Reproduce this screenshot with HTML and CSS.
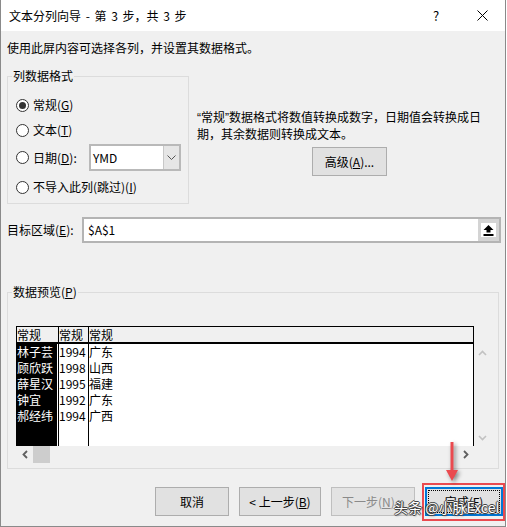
FILE: index.html
```html
<!DOCTYPE html>
<html lang="zh-CN">
<head>
<meta charset="utf-8">
<title>文本分列向导</title>
<link rel="stylesheet" href="styles.css">
</head>
<body>
<div class="window">
  <div class="titlebar">
    <span class="title">文本分列向导 - 第 3 步，共 3 步</span>
    <span class="tb-btn help">?</span>
    <span class="tb-btn close"><svg width="11" height="11" viewBox="0 0 11 11"><path d="M0.5 0.5L10.5 10.5M10.5 0.5L0.5 10.5" stroke="#000" stroke-width="1" fill="none"/></svg></span>
  </div>
  <div class="content">
    <p class="intro">使用此屏内容可选择各列，并设置其数据格式。</p>

    <div class="format-row">
      <fieldset class="group format-group">
        <legend>列数据格式</legend>
        <div class="group-inner">
          <div class="radio-row"><span class="radio checked"></span><span class="rlabel">常规(<u>G</u>)</span></div>
          <div class="radio-row gap5"><span class="radio"></span><span class="rlabel">文本(<u>T</u>)</span></div>
          <div class="radio-row date-row"><span class="radio"></span><span class="rlabel date-label">日期(<u>D</u>):</span>
            <div class="select"><span class="select-val">YMD</span><span class="select-arrow"><svg width="9" height="5" viewBox="0 0 9 5"><path d="M0.5 0.5L4.5 4.5L8.5 0.5" fill="none" stroke="#555" stroke-width="1"/></svg></span></div>
          </div>
          <div class="radio-row gap6"><span class="radio"></span><span class="rlabel">不导入此列(跳过)(<u>I</u>)</span></div>
        </div>
      </fieldset>
      <div class="desc">
        <p class="desc-text"><span class="q">“</span>常规<span class="q">”</span>数据格式将数值转换成数字，日期值会转换成日<br>期，其余数据则转换成文本。</p>
        <button class="btn adv">高级(<u>A</u>)...</button>
      </div>
    </div>

    <div class="target-row">
      <span class="target-label">目标区域(<u>E</u>):</span>
      <div class="input">
        <span class="input-val">$A$1</span>
        <span class="pick"><span class="pick-inner"><svg width="11" height="11" viewBox="0 0 11 11"><path d="M5.5 0L10.5 5H7.5V7.5H3.5V5H0.5Z" fill="#000"/><rect x="0.5" y="9" width="10" height="2" fill="#000"/></svg></span></span>
      </div>
    </div>

    <fieldset class="group preview-group">
      <legend>数据预览(<u>P</u>)</legend>
      <div class="preview">
        <div class="grid">
          <div class="grid-head">
            <span class="hc">常规</span><span class="hc sep">常规</span><span class="hc sep">常规</span>
          </div>
          <div class="grid-body">
            <div class="col col1"><div>林子芸</div><div>顾欣跃</div><div>薛星汉</div><div>钟宜</div><div>郝经纬</div></div>
            <div class="col sep"><div>1994</div><div>1998</div><div>1995</div><div>1992</div><div>1994</div></div>
            <div class="col sep"><div>广东</div><div>山西</div><div>福建</div><div>广东</div><div>广西</div></div>
          </div>
        </div>
        <div class="vscroll">
          <span class="sbtn"><svg width="9" height="6" viewBox="0 0 9 6"><path d="M1 5L4.5 1.5L8 5" fill="none" stroke="#c2c2c2" stroke-width="1.6"/></svg></span>
          <span class="sbtn"><svg width="9" height="6" viewBox="0 0 9 6"><path d="M1 1L4.5 4.5L8 1" fill="none" stroke="#c2c2c2" stroke-width="1.6"/></svg></span>
        </div>
        <div class="hscroll">
          <span class="sbtn"><svg width="6" height="9" viewBox="0 0 6 9"><path d="M5 1L1.5 4.5L5 8" fill="none" stroke="#5f5f5f" stroke-width="1.8"/></svg></span>
          <span class="thumb"></span>
          <span class="track"></span>
          <span class="sbtn"><svg width="6" height="9" viewBox="0 0 6 9"><path d="M1 1L4.5 4.5L1 8" fill="none" stroke="#5f5f5f" stroke-width="1.8"/></svg></span>
        </div>
      </div>
    </fieldset>

    <div class="buttons">
      <button class="btn b-cancel">取消</button>
      <button class="btn b-prev">&lt; 上一步(<u>B</u>)</button>
      <button class="btn b-next" disabled>下一步(<u>N</u>) &gt;</button>
      <button class="btn b-finish"><span class="focus">完成(<u>F</u>)</span></button>
    </div>
  </div>

  <span class="mark-rect"></span>
  <svg class="mark-arrow" width="16" height="42" viewBox="0 0 16 42"><line x1="8" y1="0" x2="8" y2="29" stroke="#ea4a4f" stroke-width="3"/><path d="M2 28H14L8 39Z" fill="#ea4a4f"/></svg>
  <span class="watermark">头条 @小脉Excel</span>
</div>
</body>
</html>
```

FILE: styles.css
```css
* { box-sizing: border-box; }
html, body { margin: 0; padding: 0; }
body {
  background: #ffffff;
  font-family: "Noto Sans CJK SC", "Microsoft YaHei", sans-serif;
  font-size: 12px;
  line-height: 16px;
  color: #000;
}
u { text-decoration: underline; text-underline-offset: 1px; }

.window {
  position: relative;
  width: 506px;
  height: 527px;
  border: 1px solid #8a8a8a;
  border-top: none;
  background: #f0f0f0;
  display: flex;
  flex-direction: column;
  overflow: hidden;
}

.titlebar {
  flex: none;
  height: 31px;
  background: #fff;
  display: flex;
  align-items: center;
  padding-left: 8px;
}
.title { flex: 1; font-size: 12px; word-spacing: 2px; }
.tb-btn { width: 46px; height: 31px; display: flex; align-items: center; justify-content: center; }
.help { font-size: 13px; }
.close svg { display: block; }

.content { flex: 1; padding: 9px 0 0 6px; }
.intro { margin: 0; height: 16px; }

.format-row { display: flex; margin-top: 12px; }

.group {
  margin: 0;
  padding: 0;
  border: 1px solid #dcdcdc;
  min-width: 0;
}
.group legend {
  margin-left: 4px;
  padding: 0 1px;
  line-height: 16px;
  height: 16px;
}

.format-group { width: 182px; height: 136px; }
.group-inner { padding: 11px 0 0 8px; }
.radio-row { display: flex; align-items: center; height: 20px; }
.gap5 { margin-top: 5px; }
.date-row { height: 27px; margin-top: 4px; }
.gap6 { margin-top: 6px; }
.radio {
  width: 13px; height: 13px;
  border: 1px solid #333;
  border-radius: 50%;
  background: #fff;
  flex: none;
  display: flex; align-items: center; justify-content: center;
}
.radio.checked::after {
  content: "";
  width: 7px; height: 7px;
  border-radius: 50%;
  background: #333;
}
.rlabel { margin-left: 4px; white-space: nowrap; }
.date-label { width: 56px; }
.select {
  width: 92px; height: 27px;
  border: 2px solid #b9b9b9;
  background: #fff;
  display: flex;
}
.select-val { flex: 1; padding-left: 2px; font-size: 12px; line-height: 23px; }
.select-arrow {
  width: 16px;
  background: #e6e6e6;
  border-left: 1px solid #c8c8c8;
  display: flex; align-items: center; justify-content: center;
}
.select-arrow svg { display: block; }

.desc { padding: 41px 0 0 8px; }
.desc-text { margin: 0; white-space: nowrap; }
.q { font-family: "Liberation Sans", Arial, sans-serif; }

.btn {
  font-family: inherit;
  font-size: 12px;
  line-height: 16px;
  color: #000;
  background: #e1e1e1;
  border: 1px solid #adadad;
  height: 29px;
  padding: 0;
  display: flex; align-items: center; justify-content: center;
}
.adv { width: 75px; margin: 5px 0 0 115px; }

.target-row { display: flex; align-items: center; margin-top: 13px; }
.target-label { width: 75px; }
.input {
  width: 419px; height: 26px;
  border: 2px solid #b4b4b4;
  background: #fff;
  display: flex;
}
.input-val { flex: 1; padding-left: 4px; line-height: 22px; font-size: 12px; }
.pick {
  width: 21px;
  background: #d4d4d4;
  display: flex; align-items: center; justify-content: center;
}
.pick-inner {
  width: 15px; height: 14px;
  background: #fff;
  display: flex; align-items: center; justify-content: center;
}
.pick-inner svg { display: block; }

.preview-group { width: 492px; height: 185px; margin-top: 41px; }
.preview {
  padding: 26px 0 0 8px;
  display: grid;
  grid-template-columns: 458px 17px;
  grid-template-rows: 120px 17px;
}
.grid { display: flex; flex-direction: column; }
.grid-head {
  height: 18px;
  border: 1px solid #000;
  border-bottom: 2px solid #000;
  display: grid;
  grid-template-columns: 41px 30px 1fr;
  background: #f0f0f0;
}
.hc { line-height: 15px; font-size: 12px; white-space: nowrap; }
.sep { border-left: 1px solid #000; }
.grid-body {
  flex: 1;
  border-left: 1px solid #000;
  border-right: 1px solid #000;
  background: #fff;
  display: grid;
  grid-template-columns: 41px 30px 1fr;
}
.col div { height: 16px; line-height: 16px; white-space: nowrap; }
.col1 { background: #000; color: #fff; border-right: 1px solid #fff; }

.vscroll {
  margin-top: 18px;
  display: flex; flex-direction: column; justify-content: space-between;
}
.sbtn { width: 17px; height: 17px; display: flex; align-items: center; justify-content: center; }
.sbtn svg { display: block; }
.hscroll { display: flex; height: 17px; }
.thumb { width: 17px; height: 17px; background: #cdcdcd; }
.track { flex: 1; }

.buttons { display: flex; gap: 10px; margin-top: 18px; padding-left: 148px; }
.b-cancel { width: 74px; }
.b-prev { width: 82px; }
.b-next { width: 84px; color: #8a8a8a; border-color: #bfbfbf; background: #e3e3e3; }
.b-finish { width: 78px; border: 2px solid #0078d7; padding: 1px; }
.focus {
  width: 100%; height: 100%;
  border: 1px dotted #000;
  display: flex; align-items: center; justify-content: center;
}

.mark-rect {
  position: absolute;
  left: 421px; top: 483px;
  width: 83px; height: 38px;
  border: 2px solid #ea4a4f;
}
.mark-arrow {
  position: absolute;
  left: 443px; top: 442px;
  filter: drop-shadow(2px 2px 2px rgba(0,0,0,0.45));
}
.watermark {
  position: absolute;
  left: 393px; top: 498px;
  font-size: 14px;
  line-height: 18px;
  color: #fff;
  text-shadow: 1px 0 0 #444, -1px 0 0 #444, 0 1px 0 #444, 0 -1px 0 #444, 1px 1px 2px rgba(0,0,0,0.5);
  white-space: nowrap;
}
```
